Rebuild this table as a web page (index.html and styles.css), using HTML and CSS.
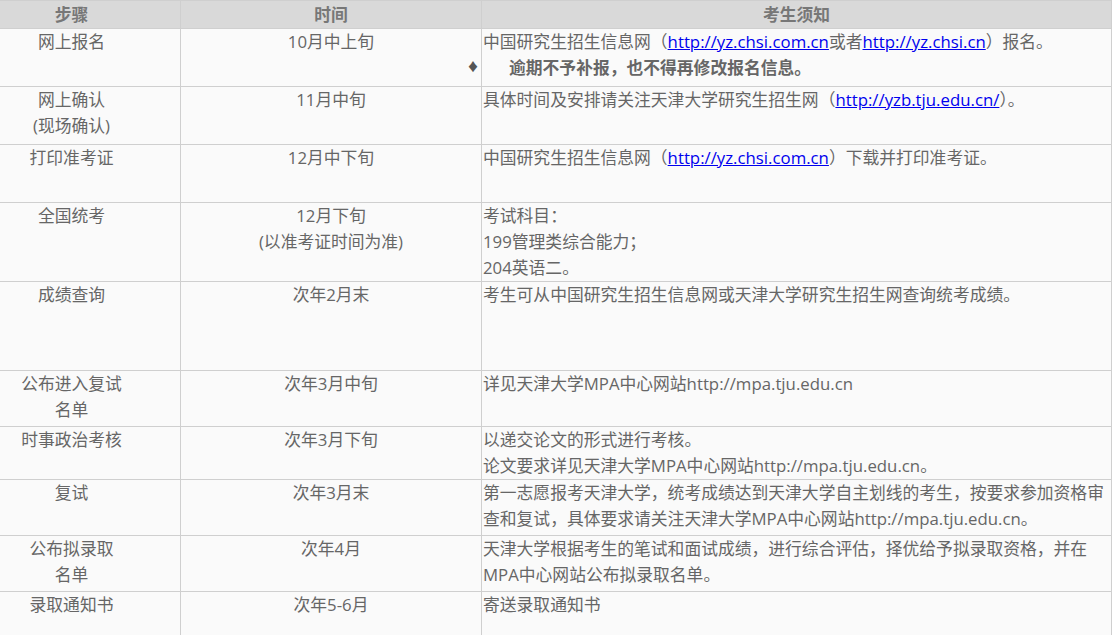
FILE: index.html
```html
<!DOCTYPE html>
<html lang="zh-CN">
<head>
<meta charset="utf-8">
<title>报考流程</title>
<link rel="stylesheet" href="styles.css">
</head>
<body>
<div class="wrap">
<table class="schedule">
  <colgroup>
    <col class="c1">
    <col class="c2">
    <col class="c3">
  </colgroup>
  <thead>
    <tr class="h28">
      <th>步骤</th>
      <th>时间</th>
      <th>考生须知</th>
    </tr>
  </thead>
  <tbody>
    <tr class="h58">
      <td class="step">网上报名</td>
      <td class="time">10月中上旬</td>
      <td class="note">中国研究生招生信息网（<a href="#">http://yz.chsi.com.cn</a>或者<a href="#">http://yz.chsi.cn</a>）报名。
        <ul class="warn"><li>逾期不予补报，也不得再修改报名信息。</li></ul>
      </td>
    </tr>
    <tr class="h58">
      <td class="step">网上确认<br>(现场确认)</td>
      <td class="time">11月中旬</td>
      <td class="note">具体时间及安排请关注天津大学研究生招生网（<a href="#">http://yzb.tju.edu.cn/</a>）。</td>
    </tr>
    <tr class="h58">
      <td class="step">打印准考证</td>
      <td class="time">12月中下旬</td>
      <td class="note">中国研究生招生信息网（<a href="#">http://yz.chsi.com.cn</a>）下载并打印准考证。</td>
    </tr>
    <tr class="h79">
      <td class="step">全国统考</td>
      <td class="time">12月下旬<br>(以准考证时间为准)</td>
      <td class="note">考试科目：<br>199管理类综合能力；<br>204英语二。</td>
    </tr>
    <tr class="h89">
      <td class="step">成绩查询</td>
      <td class="time">次年2月末</td>
      <td class="note">考生可从中国研究生招生信息网或天津大学研究生招生网查询统考成绩。</td>
    </tr>
    <tr class="h56">
      <td class="step">公布进入复试<br>名单</td>
      <td class="time">次年3月中旬</td>
      <td class="note">详见天津大学MPA中心网站http://mpa.tju.edu.cn</td>
    </tr>
    <tr class="h53">
      <td class="step">时事政治考核</td>
      <td class="time">次年3月下旬</td>
      <td class="note">以递交论文的形式进行考核。<br>论文要求详见天津大学MPA中心网站http://mpa.tju.edu.cn。</td>
    </tr>
    <tr class="h56">
      <td class="step">复试</td>
      <td class="time">次年3月末</td>
      <td class="note">第一志愿报考天津大学，统考成绩达到天津大学自主划线的考生，按要求参加资格审查和复试，具体要求请关注天津大学MPA中心网站http://mpa.tju.edu.cn。</td>
    </tr>
    <tr class="h56">
      <td class="step">公布拟录取<br>名单</td>
      <td class="time">次年4月</td>
      <td class="note">天津大学根据考生的笔试和面试成绩，进行综合评估，择优给予拟录取资格，并在MPA中心网站公布拟录取名单。</td>
    </tr>
    <tr class="h60">
      <td class="step">录取通知书</td>
      <td class="time">次年5-6月</td>
      <td class="note">寄送录取通知书</td>
    </tr>
  </tbody>
</table>
</div>
</body>
</html>
```

FILE: styles.css
```css
html, body {
  margin: 0;
  padding: 0;
  background: #fafafa;
}

.wrap {
  width: 1112px;
  height: 635px;
  overflow: hidden;
}

.schedule {
  border-collapse: collapse;
  table-layout: fixed;
  width: 1149px;
  margin-left: -38px;
  font-family: "Open Sans", "Noto Sans CJK SC", sans-serif;
  font-size: 16.8px;
  line-height: 26px;
  color: #666;
  background: #fafafa;
}

.c1 { width: 218px; }
.c2 { width: 301px; }
.c3 { width: 630px; }

.schedule th,
.schedule td {
  border: 1px solid #cfcfcf;
  padding: 0 1px;
  vertical-align: top;
}

.schedule th {
  background: #d9d9d9;
  color: #777;
  font-weight: bold;
  text-align: center;
  vertical-align: middle;
}

.step,
.time {
  text-align: center;
}

.note {
  text-align: left;
}

.note a {
  color: #0000ee;
  text-decoration: underline;
}

.warn {
  list-style: none;
  margin: 0;
  padding: 0;
}

.warn li {
  position: relative;
  padding-left: 26px;
  font-weight: bold;
  color: #666;
}

.warn li::before {
  content: "\2666";
  position: absolute;
  left: -16px;
  top: 0;
  font-size: 12px;
  color: #555;
}

.h28 { height: 28px; }
.h53 { height: 53px; }
.h56 { height: 56px; }
.h58 { height: 58px; }
.h60 { height: 60px; }
.h79 { height: 79px; }
.h89 { height: 89px; }
```
